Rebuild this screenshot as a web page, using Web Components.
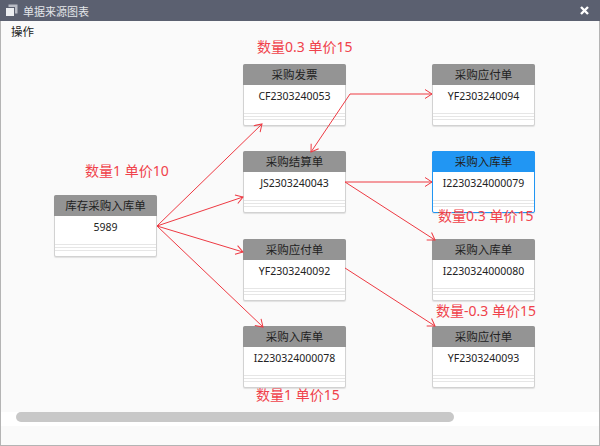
<!DOCTYPE html>
<html lang="zh">
<head>
<meta charset="utf-8">
<title>单据来源图表</title>
<style>
  html, body { margin: 0; height: 100%; }
  body { font-family: "Noto Sans", "Noto Sans CJK SC", sans-serif; overflow: hidden; }
</style>
</head>
<body>
<app-window heading="单据来源图表">
  <span slot="toolbar">操作</span>
  <flow-canvas>
    <flow-edge d="157 186 262 84"></flow-edge>
    <flow-edge d="157 186 243 157"></flow-edge>
    <flow-edge d="157 186 243 212"></flow-edge>
    <flow-edge d="157 186 263 287"></flow-edge>
    <flow-edge d="350 54 432 54"></flow-edge>
    <flow-edge d="350 54 311 112"></flow-edge>
    <flow-edge d="345 142 432 142"></flow-edge>
    <flow-edge d="345 142 435 200"></flow-edge>
    <flow-edge d="345 228 435 286"></flow-edge>

    <flow-node x="54" y="155" heading="库存采购入库单">5989</flow-node>
    <flow-node x="243" y="24" heading="采购发票">CF2303240053</flow-node>
    <flow-node x="243" y="111" heading="采购结算单">JS2303240043</flow-node>
    <flow-node x="243" y="199" heading="采购应付单">YF2303240092</flow-node>
    <flow-node x="243" y="286" heading="采购入库单">I2230324000078</flow-node>
    <flow-node x="432" y="24" heading="采购应付单">YF2303240094</flow-node>
    <flow-node x="432" y="111" heading="采购入库单" active>I2230324000079</flow-node>
    <flow-node x="432" y="199" heading="采购入库单">I2230324000080</flow-node>
    <flow-node x="432" y="286" heading="采购应付单">YF2303240093</flow-node>

    <flow-label x="257" y="-3">数量0.3 单价15</flow-label>
    <flow-label x="85" y="121">数量1 单价10</flow-label>
    <flow-label x="438" y="166">数量0.3 单价15</flow-label>
    <flow-label x="436" y="261">数量-0.3 单价15</flow-label>
    <flow-label x="256" y="345">数量1 单价15</flow-label>
  </flow-canvas>
</app-window>

<script>
class AppWindow extends HTMLElement {
  constructor() {
    super();
    this.shadowDOM = this.attachShadow({ mode: "open" });
  }

  connectedCallback() {
    this.shadowDOM.innerHTML = `
      <style>
        :host {
          display: flex;
          flex-direction: column;
          box-sizing: border-box;
          height: 446px;
          background: #fafafa;
          border: 1px solid #b4b4b4;
          border-top: 0;
          font-size: 12px;
          color: #222;
        }
        .title {
          display: flex;
          align-items: center;
          flex: 0 0 21px;
          margin: 0 -1px;
          padding: 0 11px 0 5px;
          background: #5b6070;
          color: #e4e6ea;
          font-size: 11px;
        }
        .title svg:first-child { margin-right: 5px; }
        .title span { flex: 1; }
        .toolbar {
          flex: 0 0 17px;
          padding: 2px 0 0 10px;
          line-height: 17px;
          font-size: 11.5px;
        }
        .main { flex: 0 0 372px; }
        .track {
          flex: 0 0 14px;
          background: #fff;
          padding-left: 15px;
        }
        .thumb {
          width: 438px;
          height: 10px;
          border-radius: 5px;
          background: #c8c8c8;
        }
      </style>
      <div class="title">
        <svg width="13" height="13" viewBox="0 0 13 13">
          <rect x="3.5" y="0.5" width="9" height="9" fill="#b9bcc5"/>
          <rect x="0.5" y="3.5" width="9" height="9" fill="#eceef1" stroke="#5b6070"/>
        </svg>
        <span>${this.getAttribute("heading")}</span>
        <svg width="9" height="9" viewBox="0 0 9 9">
          <path d="M1 1 8 8M8 1 1 8" stroke="#fff" stroke-width="2.4"/>
        </svg>
      </div>
      <div class="toolbar"><slot name="toolbar"></slot></div>
      <div class="main"><slot></slot></div>
      <div class="track"><div class="thumb"></div></div>`;
  }
}

class FlowCanvas extends HTMLElement {
  constructor() {
    super();
    this.shadowDOM = this.attachShadow({ mode: "open" });
  }

  connectedCallback() {
    // the edges live in one svg under the nodes
    const lines = [...this.querySelectorAll("flow-edge")].map((edge) => {
      const [x1, y1, x2, y2] = edge.getAttribute("d").split(" ");
      return `<line x1="${x1}" y1="${y1}" x2="${x2}" y2="${y2}" marker-end="url(#head)"/>`;
    });
    this.shadowDOM.innerHTML = `
      <style>
        :host {
          display: block;
          position: relative;
          height: 372px;
          margin-left: -1px;
        }
        svg { position: absolute; left: 0; top: 0; z-index: 1; overflow: visible; }
        line { stroke: #ee3a43; stroke-width: 1; }
      </style>
      <svg width="600" height="372">
        <defs>
          <marker id="head" markerUnits="userSpaceOnUse" markerWidth="12" markerHeight="12"
                  refX="9" refY="6" orient="auto">
            <path d="M2 1.5 9 6 2 10.5" fill="none" stroke="#ee3a43" stroke-width="1"/>
          </marker>
        </defs>
        ${lines.join("")}
      </svg>
      <slot></slot>`;
  }
}

class FlowEdge extends HTMLElement {
  constructor() {
    super();
    this.attachShadow({ mode: "open" }).innerHTML = `<style>:host { display: none; }</style>`;
  }
}

class FlowNode extends HTMLElement {
  constructor() {
    super();
    this.shadowDOM = this.attachShadow({ mode: "open" });
  }

  connectedCallback() {
    const head = this.hasAttribute("active") ? "#2196f3" : "#949494";
    const edge = this.hasAttribute("active") ? "#2196f3" : "#d2d2d2";
    this.shadowDOM.innerHTML = `
      <style>
        :host {
          display: flex;
          flex-direction: column;
          position: absolute;
          left: ${this.getAttribute("x")}px;
          top: ${this.getAttribute("y")}px;
          box-sizing: border-box;
          width: 103px;
          height: 62px;
          background: #fff;
          border: 1px solid ${edge};
          border-radius: 2px;
          box-shadow: 0 1px 1px rgba(0, 0, 0, 0.1);
          font-size: 10.5px;
          color: #222;
          text-align: center;
        }
        .head {
          flex: 0 0 21px;
          margin: -1px -1px 0;
          border-radius: 2px 2px 0 0;
          background: ${head};
          font-size: 11.5px;
          line-height: 21px;
        }
        .body { flex: 1; line-height: 22px; }
        .rows { flex: 0 0 12px; }
        .rows i { display: block; height: 3px; border-top: 1px solid #e6e6e6; box-sizing: border-box; }
      </style>
      <div class="head">${this.getAttribute("heading")}</div>
      <div class="body"><slot></slot></div>
      <div class="rows"><i></i><i></i><i></i></div>`;
  }
}

class FlowLabel extends HTMLElement {
  constructor() {
    super();
    this.shadowDOM = this.attachShadow({ mode: "open" });
  }

  connectedCallback() {
    this.shadowDOM.innerHTML = `
      <style>
        :host {
          position: absolute;
          left: ${this.getAttribute("x")}px;
          top: ${this.getAttribute("y")}px;
          z-index: 2;
          color: #f0424b;
          font-size: 14px;
          line-height: 20px;
          white-space: nowrap;
        }
      </style>
      <slot></slot>`;
  }
}

customElements.define("app-window", AppWindow);
customElements.define("flow-canvas", FlowCanvas);
customElements.define("flow-edge", FlowEdge);
customElements.define("flow-node", FlowNode);
customElements.define("flow-label", FlowLabel);
</script>
</body>
</html>
